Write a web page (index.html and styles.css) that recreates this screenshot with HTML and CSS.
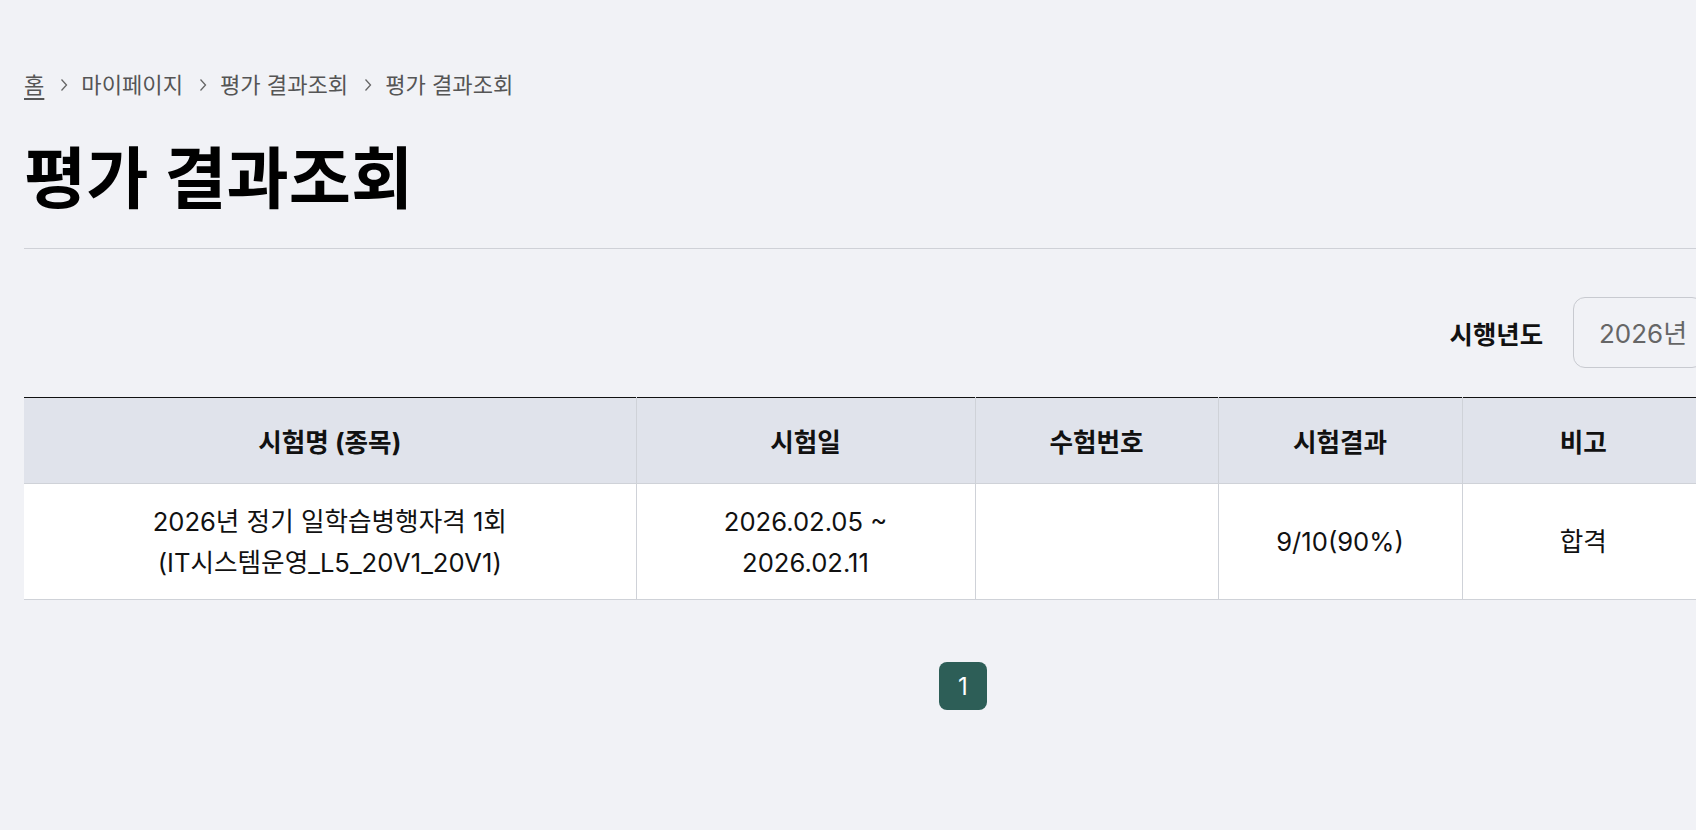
FILE: index.html
```html
<!DOCTYPE html>
<html lang="ko">
<head>
<meta charset="utf-8">
<title>평가 결과조회</title>
<link rel="stylesheet" href="styles.css">
</head>
<body>
<div class="page">
  <nav class="breadcrumb">
    <a class="crumb home" href="#">홈</a>
    <svg class="chev" viewBox="0 0 8 14" width="8" height="14"><path d="M1.5 1.5 L6.5 7 L1.5 12.5" fill="none" stroke="#666" stroke-width="1.3"/></svg>
    <span class="crumb">마이페이지</span>
    <svg class="chev" viewBox="0 0 8 14" width="8" height="14"><path d="M1.5 1.5 L6.5 7 L1.5 12.5" fill="none" stroke="#666" stroke-width="1.3"/></svg>
    <span class="crumb">평가 결과조회</span>
    <svg class="chev" viewBox="0 0 8 14" width="8" height="14"><path d="M1.5 1.5 L6.5 7 L1.5 12.5" fill="none" stroke="#666" stroke-width="1.3"/></svg>
    <span class="crumb">평가 결과조회</span>
  </nav>
  <h1 class="title">평가 결과조회</h1>
  <div class="filter">
    <label class="filter-label">시행년도</label>
    <div class="select">2026년</div>
  </div>
  <table class="result">
    <colgroup>
      <col class="c1"><col class="c2"><col class="c3"><col class="c4"><col class="c5">
    </colgroup>
    <thead>
      <tr>
        <th>시험명 (종목)</th>
        <th>시험일</th>
        <th>수험번호</th>
        <th>시험결과</th>
        <th>비고</th>
      </tr>
    </thead>
    <tbody>
      <tr>
        <td>2026년 정기 일학습병행자격 1회<br>(IT시스템운영_L5_20V1_20V1)</td>
        <td>2026.02.05 ~<br>2026.02.11</td>
        <td></td>
        <td>9/10(90%)</td>
        <td>합격</td>
      </tr>
    </tbody>
  </table>
  <div class="pager">
    <a class="page-btn active" href="#">1</a>
  </div>
</div>
</body>
</html>
```

FILE: styles.css
```css
html, body {
  margin: 0;
  padding: 0;
}
body {
  background: #f1f2f6;
  font-family: Inter, "Noto Sans CJK KR", sans-serif;
  color: #111;
  overflow: hidden;
}
.page {
  width: 1680px;
  padding-left: 24px;
}
.breadcrumb {
  display: flex;
  align-items: center;
  gap: 13px;
  padding-top: 70px;
  height: 30px;
  font-size: 22.1px;
  line-height: 30px;
  color: #555;
}
.crumb {
  color: #555;
  text-decoration: none;
}
.crumb.home {
  text-decoration: underline;
  text-underline-offset: 5px;
}
.chev {
  display: block;
  margin-left: 3px;
}
.title {
  margin: 40px 0 0 0;
  font-size: 67.6px;
  line-height: 78px;
  font-weight: 700;
  color: #000;
  padding-bottom: 30px;
  border-bottom: 1px solid #cfd1d7;
}
.filter {
  display: flex;
  justify-content: flex-end;
  align-items: center;
  gap: 30px;
  margin-top: 48px;
}
.filter-label {
  font-size: 25.4px;
  font-weight: 700;
  color: #111;
}
.select {
  box-sizing: border-box;
  width: 131px;
  height: 71px;
  border: 1px solid #c8cad0;
  border-radius: 12px;
  background: #f1f2f6;
  padding-left: 25px;
  padding-bottom: 3px;
  display: flex;
  align-items: center;
  font-size: 26px;
  color: #666;
}
.result {
  width: 1680px;
  margin-top: 29px;
  border-collapse: collapse;
  table-layout: fixed;
  border-top: 1px solid #111;
}
.c1 { width: 612px; }
.c2 { width: 339px; }
.c3 { width: 243px; }
.c4 { width: 244px; }
.c5 { width: 242px; }
.result th {
  background: #e0e3eb;
  height: 85px;
  font-size: 25.6px;
  font-weight: 700;
  color: #111;
  border-bottom: 1px solid #cfd2d8;
  border-left: 1px solid #cfd2d8;
  padding: 0;
}
.result td {
  background: #fff;
  height: 115px;
  font-size: 25.6px;
  line-height: 41px;
  text-align: center;
  color: #111;
  border-bottom: 1px solid #cfd2d8;
  border-left: 1px solid #cfd2d8;
  padding: 0;
}
.result th:first-child,
.result td:first-child {
  border-left: none;
}
.pager {
  width: 1878px;
  display: flex;
  justify-content: center;
  margin-top: 62px;
}
.page-btn {
  width: 48px;
  height: 48px;
  border-radius: 8px;
  display: flex;
  align-items: center;
  justify-content: center;
  font-size: 24px;
  text-decoration: none;
}
.page-btn.active {
  background: #2d5e57;
  color: #fff;
}
```
